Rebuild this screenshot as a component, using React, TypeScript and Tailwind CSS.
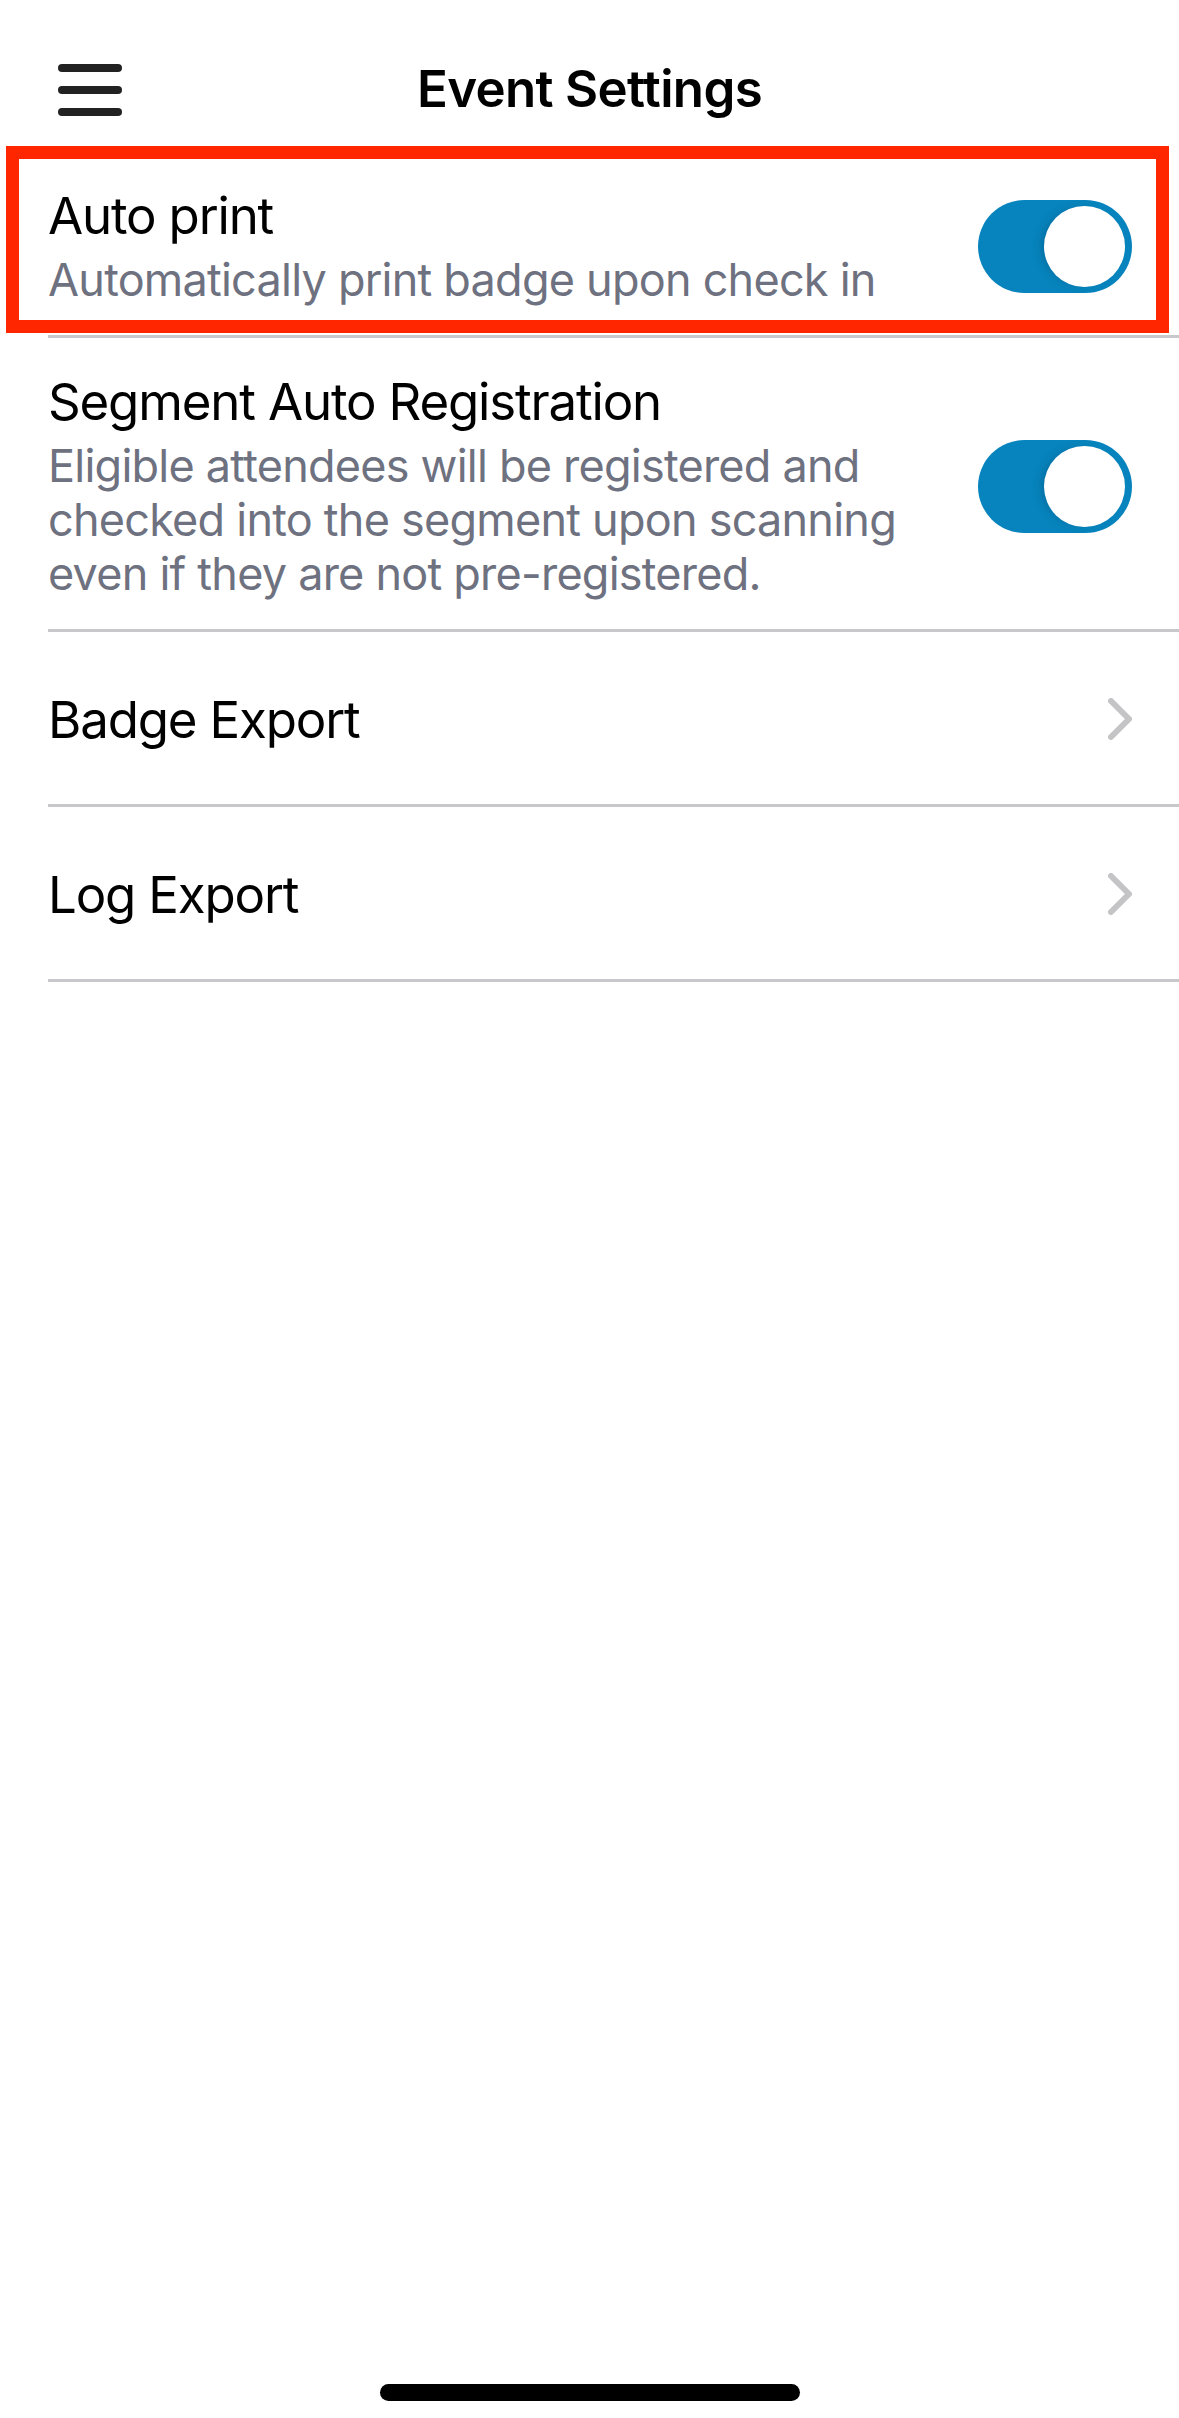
import { ReactNode } from "react";

type ToggleRowProps = {
  title: string;
  subtitle: ReactNode;
  highlighted?: boolean;
};

function Toggle() {
  return (
    <div className="relative flex h-[93px] w-[154px] shrink-0 items-center justify-end rounded-full bg-[#0784bd] pr-[7px]">
      <div className="h-[81px] w-[81px] rounded-full bg-white shadow-[-6px_0_10px_-4px_rgba(0,60,100,0.35)]" />
    </div>
  );
}

function ToggleRow({ title, subtitle, highlighted }: ToggleRowProps) {
  return (
    <div className="relative ml-[48px] flex items-center justify-between gap-6 border-b-[3px] border-[#c8c8cc] pb-[28px] pr-[47px] pt-[33px]">
      <div className="min-w-0 flex-1">
        <p className="text-[51px] leading-[61px] tracking-[-0.023em] text-black">
          {title}
        </p>
        <p className="mt-[7px] text-[45px] leading-[54px] tracking-[-0.017em] text-[#6e7180]">
          {subtitle}
        </p>
      </div>
      <Toggle />
      {highlighted && (
        // annotation frame drawn over the row
        <div className="pointer-events-none absolute -left-[42px] -top-[6px] bottom-[2px] right-[10px] border-[13px] border-[#ff2600]" />
      )}
    </div>
  );
}

function NavRow({ title }: { title: string }) {
  return (
    <div className="ml-[48px] flex h-[175px] items-center justify-between border-b-[3px] border-[#c8c8cc] pr-[47px] pt-[2px]">
      <p className="text-[51px] leading-[61px] tracking-[-0.023em] text-black">
        {title}
      </p>
      <svg width="24" height="42" viewBox="0 0 24 42" fill="none">
        <polyline
          points="3,3 21,21 3,39"
          stroke="#c4c4c7"
          strokeWidth="6"
          strokeLinecap="round"
          strokeLinejoin="round"
        />
      </svg>
    </div>
  );
}

export default function App() {
  return (
    <div
      className="flex min-h-[2418px] w-full flex-col bg-white"
      style={{ fontFamily: "Inter, 'Noto Sans', sans-serif" }}
    >
      {/* Header */}
      <header className="relative flex h-[152px] items-start justify-center pt-[58px]">
        <div className="absolute left-[58px] top-[64px] flex w-[64px] flex-col gap-[14px]">
          <span className="block h-[8px] rounded-full bg-[#222]" />
          <span className="block h-[8px] rounded-full bg-[#222]" />
          <span className="block h-[8px] rounded-full bg-[#222]" />
        </div>
        <h1 className="text-[51px] font-semibold leading-[61px] tracking-[-0.013em] text-black">
          Event Settings
        </h1>
      </header>

      <ToggleRow
        title="Auto print"
        subtitle="Automatically print badge upon check in"
        highlighted
      />
      <ToggleRow
        title="Segment Auto Registration"
        subtitle={
          <>
            Eligible attendees will be registered and
            <br />
            checked into the segment upon scanning
            <br />
            even if they are not pre-registered.
          </>
        }
      />
      <NavRow title="Badge Export" />
      <NavRow title="Log Export" />

      {/* Home indicator */}
      <div className="mt-auto flex justify-center pb-[17px]">
        <div className="h-[17px] w-[420px] rounded-full bg-black" />
      </div>
    </div>
  );
}
